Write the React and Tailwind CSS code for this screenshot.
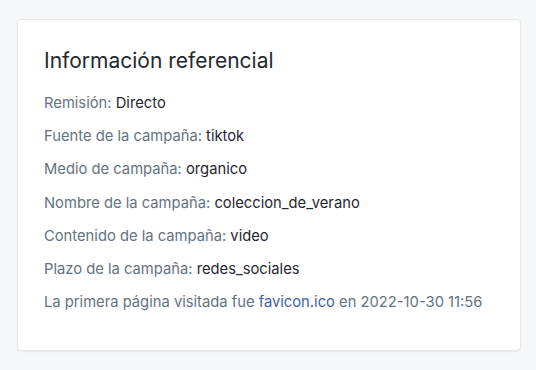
import React from 'react';

const rows = [
  ['Remisión', 'Directo'],
  ['Fuente de la campaña', 'tiktok'],
  ['Medio de campaña', 'organico'],
  ['Nombre de la campaña', 'coleccion_de_verano'],
  ['Contenido de la campaña', 'video'],
  ['Plazo de la campaña', 'redes_sociales'],
];

const App = () => {
  return (
    <div className="min-h-screen bg-[#f6f7f9] pt-[19px] pl-[17px] pr-[15px] pb-[19px] font-['Inter',sans-serif]">
      <div className="bg-white rounded-[4px] border border-[#e6e8eb] shadow-[0_1px_2px_rgba(0,0,0,0.06)] pl-[26px] pr-6 pt-[26px] pb-[38px]">
        <h2 className="text-[21px] leading-[30px] text-[#24292f] mb-[17px]">Información referencial</h2>
        <div className="flex flex-col gap-[13.2px] text-[14.75px] leading-[20px]">
          {rows.map(([label, value]) => (
            <p key={label} className="text-[#637381]">
              {label}: <span className="text-[#1f2630]">{value}</span>
            </p>
          ))}
          <p className="text-[#637381]">
            La primera página visitada fue <span className="text-[#3f5da8]">favicon.ico</span> en 2022-10-30 11:56
          </p>
        </div>
      </div>
    </div>
  );
};

export default App;
